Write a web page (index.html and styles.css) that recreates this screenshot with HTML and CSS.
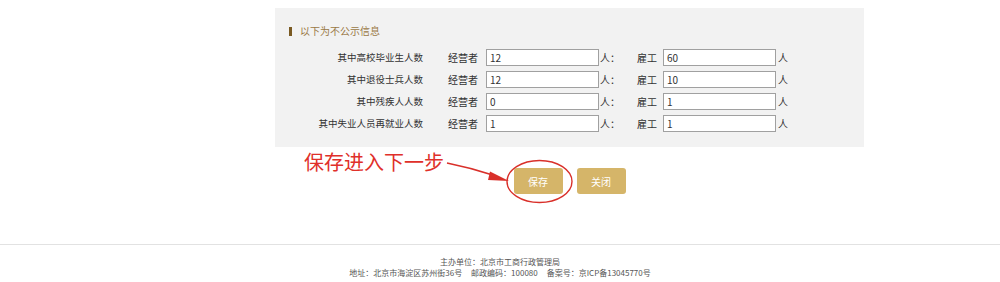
FILE: index.html
```html
<!DOCTYPE html>
<html lang="zh-CN">
<head>
<meta charset="utf-8">
<title>以下为不公示信息</title>
<link rel="stylesheet" href="styles.css">
</head>
<body>
<div class="page">
  <section class="panel">
    <h2 class="panel-title"><span class="bar"></span>以下为不公示信息</h2>
    <div class="row">
      <span class="label">其中高校毕业生人数</span>
      <span class="who">经营者</span>
      <input class="field" type="text" value="12">
      <span class="unit">人：</span>
      <span class="who2">雇工</span>
      <input class="field field2" type="text" value="60">
      <span class="unit2">人</span>
    </div>
    <div class="row">
      <span class="label">其中退役士兵人数</span>
      <span class="who">经营者</span>
      <input class="field" type="text" value="12">
      <span class="unit">人：</span>
      <span class="who2">雇工</span>
      <input class="field field2" type="text" value="10">
      <span class="unit2">人</span>
    </div>
    <div class="row">
      <span class="label">其中残疾人人数</span>
      <span class="who">经营者</span>
      <input class="field" type="text" value="0">
      <span class="unit">人：</span>
      <span class="who2">雇工</span>
      <input class="field field2" type="text" value="1">
      <span class="unit2">人</span>
    </div>
    <div class="row">
      <span class="label">其中失业人员再就业人数</span>
      <span class="who">经营者</span>
      <input class="field" type="text" value="1">
      <span class="unit">人：</span>
      <span class="who2">雇工</span>
      <input class="field field2" type="text" value="1">
      <span class="unit2">人</span>
    </div>
  </section>

  <div class="actions">
    <button class="btn" type="button">保存</button>
    <button class="btn" type="button">关闭</button>
  </div>

  <div class="note">保存进入下一步</div>
  <svg class="note-art" width="1000" height="282" viewBox="0 0 1000 282" aria-hidden="true">
    <path d="M447 163 Q472 168 496 176" fill="none" stroke="#d9302a" stroke-width="1.6"/>
    <polygon points="490,171.5 509,181 488,180" fill="#d9302a"/>
    <ellipse cx="539.5" cy="181.5" rx="32.5" ry="21" fill="none" stroke="#d9302a" stroke-width="1.4"/>
  </svg>
</div>

<footer class="footer">
  <p>主办单位：北京市工商行政管理局</p>
  <p>地址：北京市海淀区苏州街36号&nbsp;&nbsp;&nbsp;&nbsp;&nbsp;邮政编码：100080&nbsp;&nbsp;&nbsp;&nbsp;&nbsp;备案号：京ICP备13045770号</p>
</footer>
</body>
</html>
```

FILE: styles.css
```css
* { box-sizing: border-box; }

html, body {
  margin: 0;
  padding: 0;
  background: #ffffff;
}

body {
  font-family: "Noto Sans CJK SC", "Noto Sans", sans-serif;
  color: #333333;
  font-size: 10px;
}

.page {
  position: relative;
  padding-top: 8px;
  height: 244px;
}

.panel {
  margin-left: 275px;
  width: 589px;
  background: #f2f2f2;
  padding: 17px 0 15px 0;
}

.panel-title {
  margin: 0 0 12px 0;
  padding-left: 14px;
  display: flex;
  align-items: center;
  font-size: 10px;
  font-weight: normal;
  line-height: 12px;
  height: 12px;
  color: #9a7945;
}

.bar {
  display: inline-block;
  width: 3px;
  height: 9px;
  background: #7a5a22;
  margin-right: 8px;
}

.row {
  display: flex;
  align-items: center;
  height: 17px;
  margin-bottom: 5px;
  line-height: 17px;
}

.row:last-child { margin-bottom: 0; }

.label {
  width: 148px;
  text-align: right;
  font-size: 9.5px;
}

.who {
  margin-left: 25px;
  width: 30px;
}

.field {
  margin: 0 0 0 8px;
  width: 113px;
  height: 17px;
  border: 1px solid #a0a0a0;
  background: #ffffff;
  padding: 0 3px;
  font-family: "Noto Sans CJK SC", "Noto Sans", sans-serif;
  font-size: 10px;
  color: #333333;
  outline: none;
  border-radius: 0;
}

.unit {
  margin-left: 1px;
  width: 20px;
}

.who2 {
  margin-left: 17px;
  width: 20px;
}

.field2 { margin-left: 6px; }

.unit2 { margin-left: 2px; }

.actions {
  margin-left: 275px;
  width: 589px;
  margin-top: 21px;
  display: flex;
  justify-content: center;
  gap: 14px;
}

.btn {
  width: 49px;
  height: 26px;
  border: none;
  border-radius: 3px;
  background: #d5b569;
  color: #ffffff;
  font-family: "Noto Sans CJK SC", "Noto Sans", sans-serif;
  font-size: 10px;
  padding: 0;
}

.note {
  position: absolute;
  left: 304px;
  top: 151px;
  font-size: 20px;
  line-height: 22px;
  color: #e0302a;
  letter-spacing: 0;
}

.note-art {
  position: absolute;
  left: 0;
  top: 0;
  pointer-events: none;
}

.footer {
  border-top: 1px solid #e2e2e2;
  padding-top: 11px;
  text-align: center;
  color: #555555;
  font-size: 8px;
  line-height: 11px;
}

.footer p { margin: 0; }
```
